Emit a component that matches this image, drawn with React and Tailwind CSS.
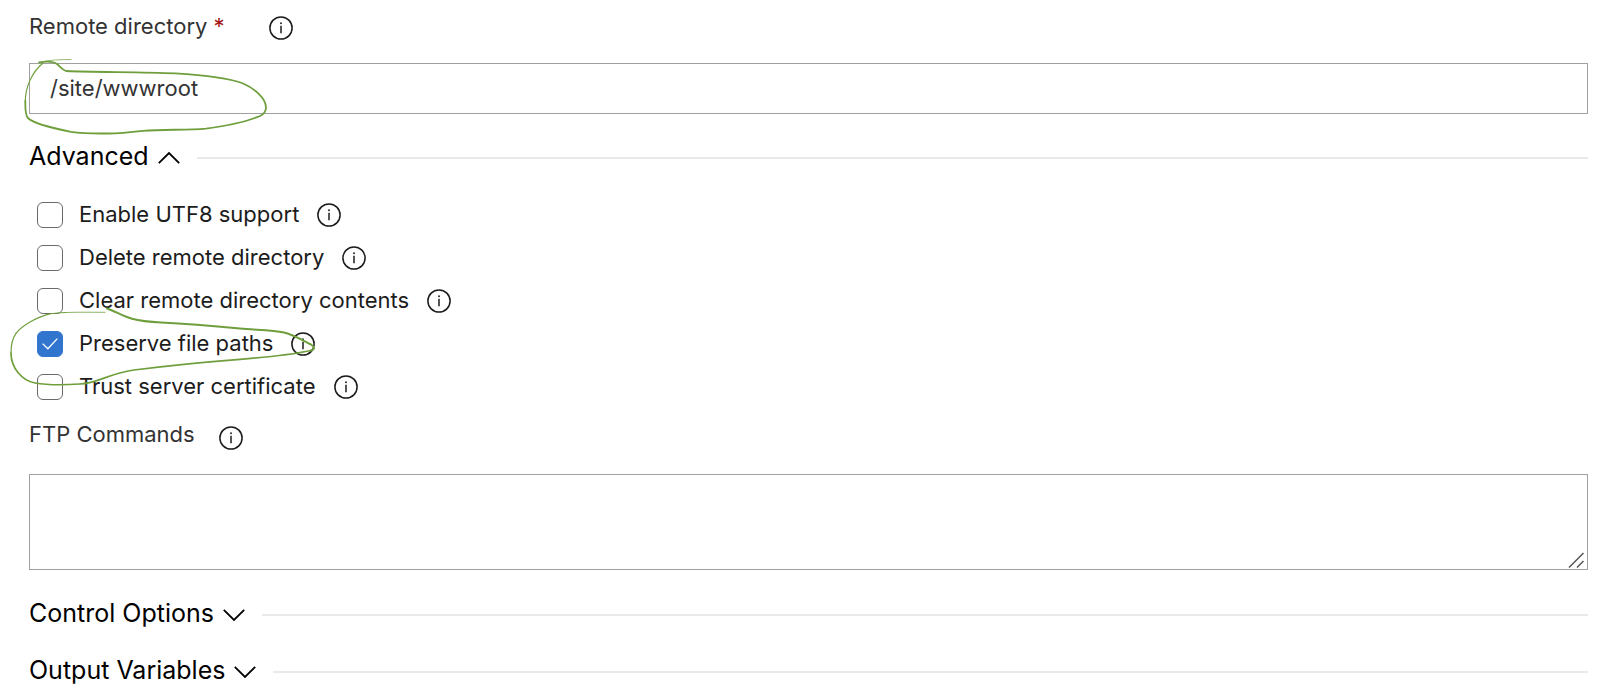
import { useState } from "react";

function InfoButton({ topic }) {
  return (
    <button type="button" aria-label={`About ${topic}`} className="shrink-0 text-[#1c1c1c]">
      <svg viewBox="0 0 24 24" className="block size-6" fill="none" stroke="currentColor">
        <circle cx="12" cy="12" r="11.1" strokeWidth="1.5" />
        <path d="M12 9.7V17.2" strokeWidth="1.5" />
        <circle cx="12" cy="7.3" r="0.95" fill="currentColor" stroke="none" />
      </svg>
    </button>
  );
}

function FieldLabel({ id, text, required }) {
  return (
    <div className="flex h-14 items-center">
      <label htmlFor={id} className="pb-1 text-[22px] leading-7 text-[#333]">
        {text}
        {required && <span className="text-[#a4120f]"> *</span>}
      </label>
      <div className={required ? "ml-11 flex" : "ml-6 flex pt-1"}>
        <InfoButton topic={text} />
      </div>
    </div>
  );
}

function CheckRow({ id, text, initial }) {
  const [checked, setChecked] = useState(initial);
  return (
    <div className="flex h-[43px] items-center pl-2">
      <span className="relative size-[26px]">
        <input
          id={id}
          type="checkbox"
          checked={checked}
          onChange={(e) => setChecked(e.target.checked)}
          className="block size-[26px] appearance-none rounded-md border border-[#6a6a6a] bg-white checked:border-[#3275cf] checked:bg-[#3275cf]"
        />
        {checked && (
          <svg viewBox="0 0 26 26" className="pointer-events-none absolute inset-0" fill="none" stroke="white" strokeWidth="1.3">
            <path d="M5.6 12.6L10.9 17.8L20.3 7.6" />
          </svg>
        )}
      </span>
      <label htmlFor={id} className="ml-4 mr-[18px] pb-0.5 text-[22px] leading-7 text-[#1c1c1c]">
        {text}
      </label>
      <InfoButton topic={text} />
    </div>
  );
}

function SectionHeader({ text, open, onToggle }) {
  return (
    <div className="flex h-[30px] items-center">
      <button type="button" aria-expanded={open} onClick={onToggle} className="flex items-center gap-2 pr-4 text-[25px] leading-[30px] text-black">
        <span className="pb-1">{text}</span>
        <svg viewBox="0 0 24 14" className="h-[14px] w-6" fill="none" stroke="currentColor" strokeWidth="1.8">
          <path d={open ? "M1.8 12.2L12 2L22.2 12.2" : "M1.8 1.8L12 12L22.2 1.8"} />
        </svg>
      </button>
      <div className="h-0.5 flex-1 bg-[#e9e9e9]" />
    </div>
  );
}

const OPTIONS = [
  { id: "utf8", text: "Enable UTF8 support", initial: false },
  { id: "delete", text: "Delete remote directory", initial: false },
  { id: "clear", text: "Clear remote directory contents", initial: false },
  { id: "preserve", text: "Preserve file paths", initial: true },
  { id: "trust", text: "Trust server certificate", initial: false },
];

function PenMarks() {
  return (
    <svg viewBox="0 0 320 400" className="pointer-events-none absolute left-0 top-0 h-[400px] w-[320px]" fill="none" stroke="#6f9f3c" strokeLinecap="round" strokeLinejoin="round">
      <path strokeWidth="1.8" d="M39 62.3C46 61.2 53 61 57 64C60 66.3 62 69.5 66 71C95 72.3 140 71.8 175 73.3C207 75.3 230 78.5 242 83C254 88 266 98 266 107.5C266 111 264 114 260 116C246 122 225 126 206 128.6C187 130.2 165 129.3 143 130.8C132 131.5 129 133.2 115 133.3C100 133.7 83 133.6 71 131.8C54 128.5 34 124 28 118C25 115 25.3 108 25.3 101" />
      <path strokeWidth="1.2" d="M25.3 101C25.5 88 31 73 43 63" />
      <path strokeWidth="0.7" d="M42 61.8C50 60 60 59.5 71 59.5" />
      <path strokeWidth="2" d="M107 308.5C115 311 122 316 132 318.8C142 321.5 150 322 161 322.5C185 323.5 215 326 240 328.5C255 330 272 330 284 332.5C294 335 304 341 311 344.5C315 347 315 349 311 350.5" />
      <path strokeWidth="1.7" d="M311 350.5C290 355 270 357 240 359.3C205 362 165 366 134 370C107 374 99 383 80 384C65 385 48 385.3 35 383C22 380.5 11 368 11 353" />
      <path strokeWidth="1.2" d="M11 353C11 335 18 329 30 322C43 315 50 312.7 66 312.5" />
      <path strokeWidth="0.8" d="M66 312.5C80 312 92 312.3 105 312.3" />
    </svg>
  );
}

export default function App() {
  const [open, setOpen] = useState({ advanced: true, control: false, output: false });
  const toggle = (key) => () => setOpen((s) => ({ ...s, [key]: !s[key] }));

  return (
    <main className="relative bg-white pb-2 pl-[29px] pr-[26px] font-['Inter','Liberation_Sans',sans-serif]">
      <FieldLabel id="remote-directory" text="Remote directory" required />
      <input
        id="remote-directory"
        type="text"
        required
        defaultValue="/site/wwwroot"
        className="mt-[7px] block h-[51px] w-full border border-[#a0a0a0] bg-white px-5 pb-0.5 text-[22px] leading-7 text-[#333] outline-none"
      />

      <section className="mt-[29px]">
        <SectionHeader text="Advanced" open={open.advanced} onToggle={toggle("advanced")} />
        {open.advanced && (
          <div className="mt-5">
            {OPTIONS.map((o) => (
              <CheckRow key={o.id} {...o} />
            ))}
            <FieldLabel id="ftp-commands" text="FTP Commands" />
            <div className="relative mt-[10px]">
              <textarea id="ftp-commands" className="block h-24 w-full resize-none border border-[#a0a0a0] bg-white px-5 py-3 text-[22px] leading-7 text-[#333] outline-none" />
              <svg viewBox="0 0 16 16" className="pointer-events-none absolute bottom-0.5 right-1 size-4" fill="none" stroke="#555" strokeWidth="1.5">
                <path d="M1 15.5L15.5 1M9 15.5L15.5 9" />
              </svg>
            </div>
          </div>
        )}
      </section>

      <section className="mt-[30px]">
        <SectionHeader text="Control Options" open={open.control} onToggle={toggle("control")} />
      </section>
      <section className="mt-[27px]">
        <SectionHeader text="Output Variables" open={open.output} onToggle={toggle("output")} />
      </section>
      <PenMarks />
    </main>
  );
}
